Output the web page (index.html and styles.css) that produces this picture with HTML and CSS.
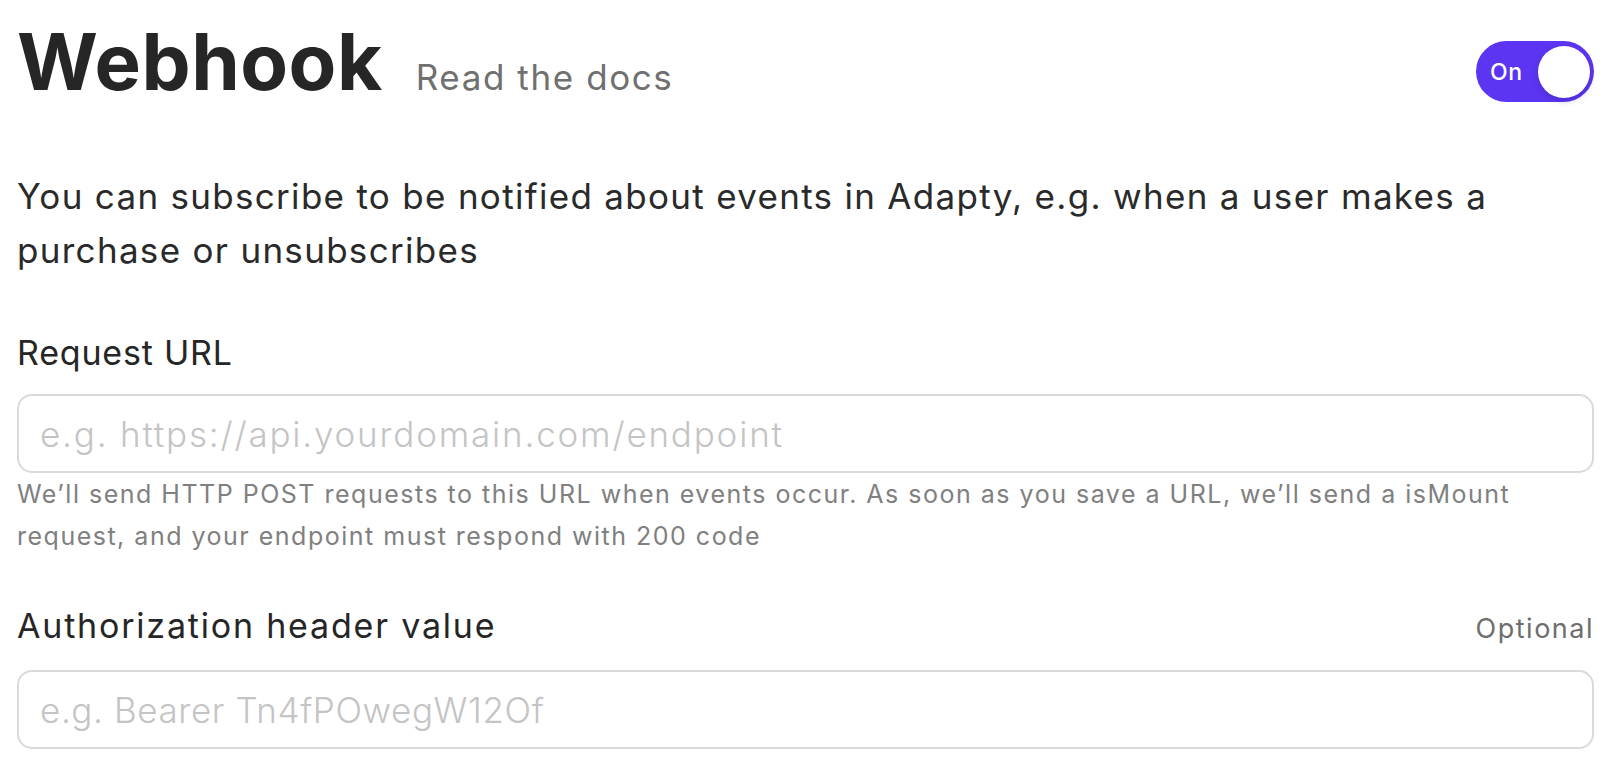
FILE: index.html
```html
<!DOCTYPE html>
<html lang="en">
<head>
<meta charset="utf-8">
<title>Webhook</title>
<link rel="stylesheet" href="styles.css">
</head>
<body>
<main class="page">
  <header class="head">
    <div class="title-group">
      <h1 class="title">Webhook</h1>
      <a class="docs" href="#">Read the docs</a>
    </div>
    <div class="toggle" role="switch" aria-checked="true">
      <span class="toggle-label">On</span>
      <span class="knob"></span>
    </div>
  </header>

  <p class="desc">You can subscribe to be notified about events in Adapty, e.g. when a user makes a purchase or unsubscribes</p>

  <section class="field">
    <div class="label-row">
      <label class="label" for="url">Request URL</label>
    </div>
    <input class="input" id="url" type="text" placeholder="e.g. https://api.yourdomain.com/endpoint">
    <p class="hint">We’ll send HTTP POST requests to this URL when events occur. As soon as you save a URL, we’ll send a isMount request, and your endpoint must respond with 200 code</p>
  </section>

  <section class="field field-auth">
    <div class="label-row">
      <label class="label label-wide" for="auth">Authorization header value</label>
      <span class="optional">Optional</span>
    </div>
    <input class="input input-narrow" id="auth" type="text" placeholder="e.g. Bearer Tn4fPOwegW12Of">
  </section>
</main>
</body>
</html>
```

FILE: styles.css
```css
* { box-sizing: border-box; }
html, body { margin: 0; background: #ffffff; }
body {
  font-family: Inter, "Noto Sans", sans-serif;
  color: #262626;
}
.page {
  width: 1618px;
  padding: 14px 24px 0 17px;
}
.head {
  display: flex;
  justify-content: space-between;
  align-items: flex-start;
}
.title-group {
  display: flex;
  align-items: baseline;
  gap: 33px;
}
.title {
  margin: 0;
  font-size: 78px;
  font-weight: 700;
  line-height: 96px;
  letter-spacing: 0.5px;
  color: #262626;
}
.docs {
  font-size: 35px;
  letter-spacing: 1.6px;
  color: #707070;
  text-decoration: none;
}
.toggle {
  margin-top: 27px;
  width: 118px;
  height: 61px;
  border-radius: 31px;
  background: #5b35f2;
  display: flex;
  align-items: center;
  justify-content: space-between;
  padding: 0 4px 0 14px;
}
.toggle-label {
  color: #ffffff;
  font-size: 23px;
  font-weight: 500;
  letter-spacing: 0.5px;
}
.knob {
  width: 52px;
  height: 52px;
  border-radius: 50%;
  background: #ffffff;
  box-shadow: 0 3px 6px rgba(40, 20, 120, 0.25);
}
.desc {
  margin: 59px 0 0;
  font-size: 35px;
  line-height: 54px;
  letter-spacing: 1.3px;
  color: #2a2a2a;
  max-width: 1560px;
}
.field { margin-top: 54px; }
.field-auth { margin-top: 47px; }
.label-row {
  display: flex;
  justify-content: space-between;
  align-items: baseline;
  margin-bottom: 19px;
}
.field-auth .label-row { margin-bottom: 22px; }
.label {
  font-size: 34px;
  line-height: 44px;
  font-weight: 400;
  letter-spacing: 0.8px;
  color: #262626;
}
.label-wide { letter-spacing: 1.8px; }
.optional {
  font-size: 27px;
  letter-spacing: 1.5px;
  color: #6e6e6e;
}
.input {
  display: block;
  width: 100%;
  height: 79px;
  border: 2px solid #dadada;
  border-radius: 15px;
  padding: 0 21px;
  font-family: inherit;
  font-size: 35px;
  letter-spacing: 1.8px;
  color: #262626;
  background: #fff;
  outline: none;
}
.input-narrow { letter-spacing: 0.6px; }
.input::placeholder { color: #c4c4c4; font-weight: 300; }
.hint {
  margin: 0;
  font-size: 25px;
  line-height: 42px;
  letter-spacing: 1.5px;
  color: #808080;
}
```
